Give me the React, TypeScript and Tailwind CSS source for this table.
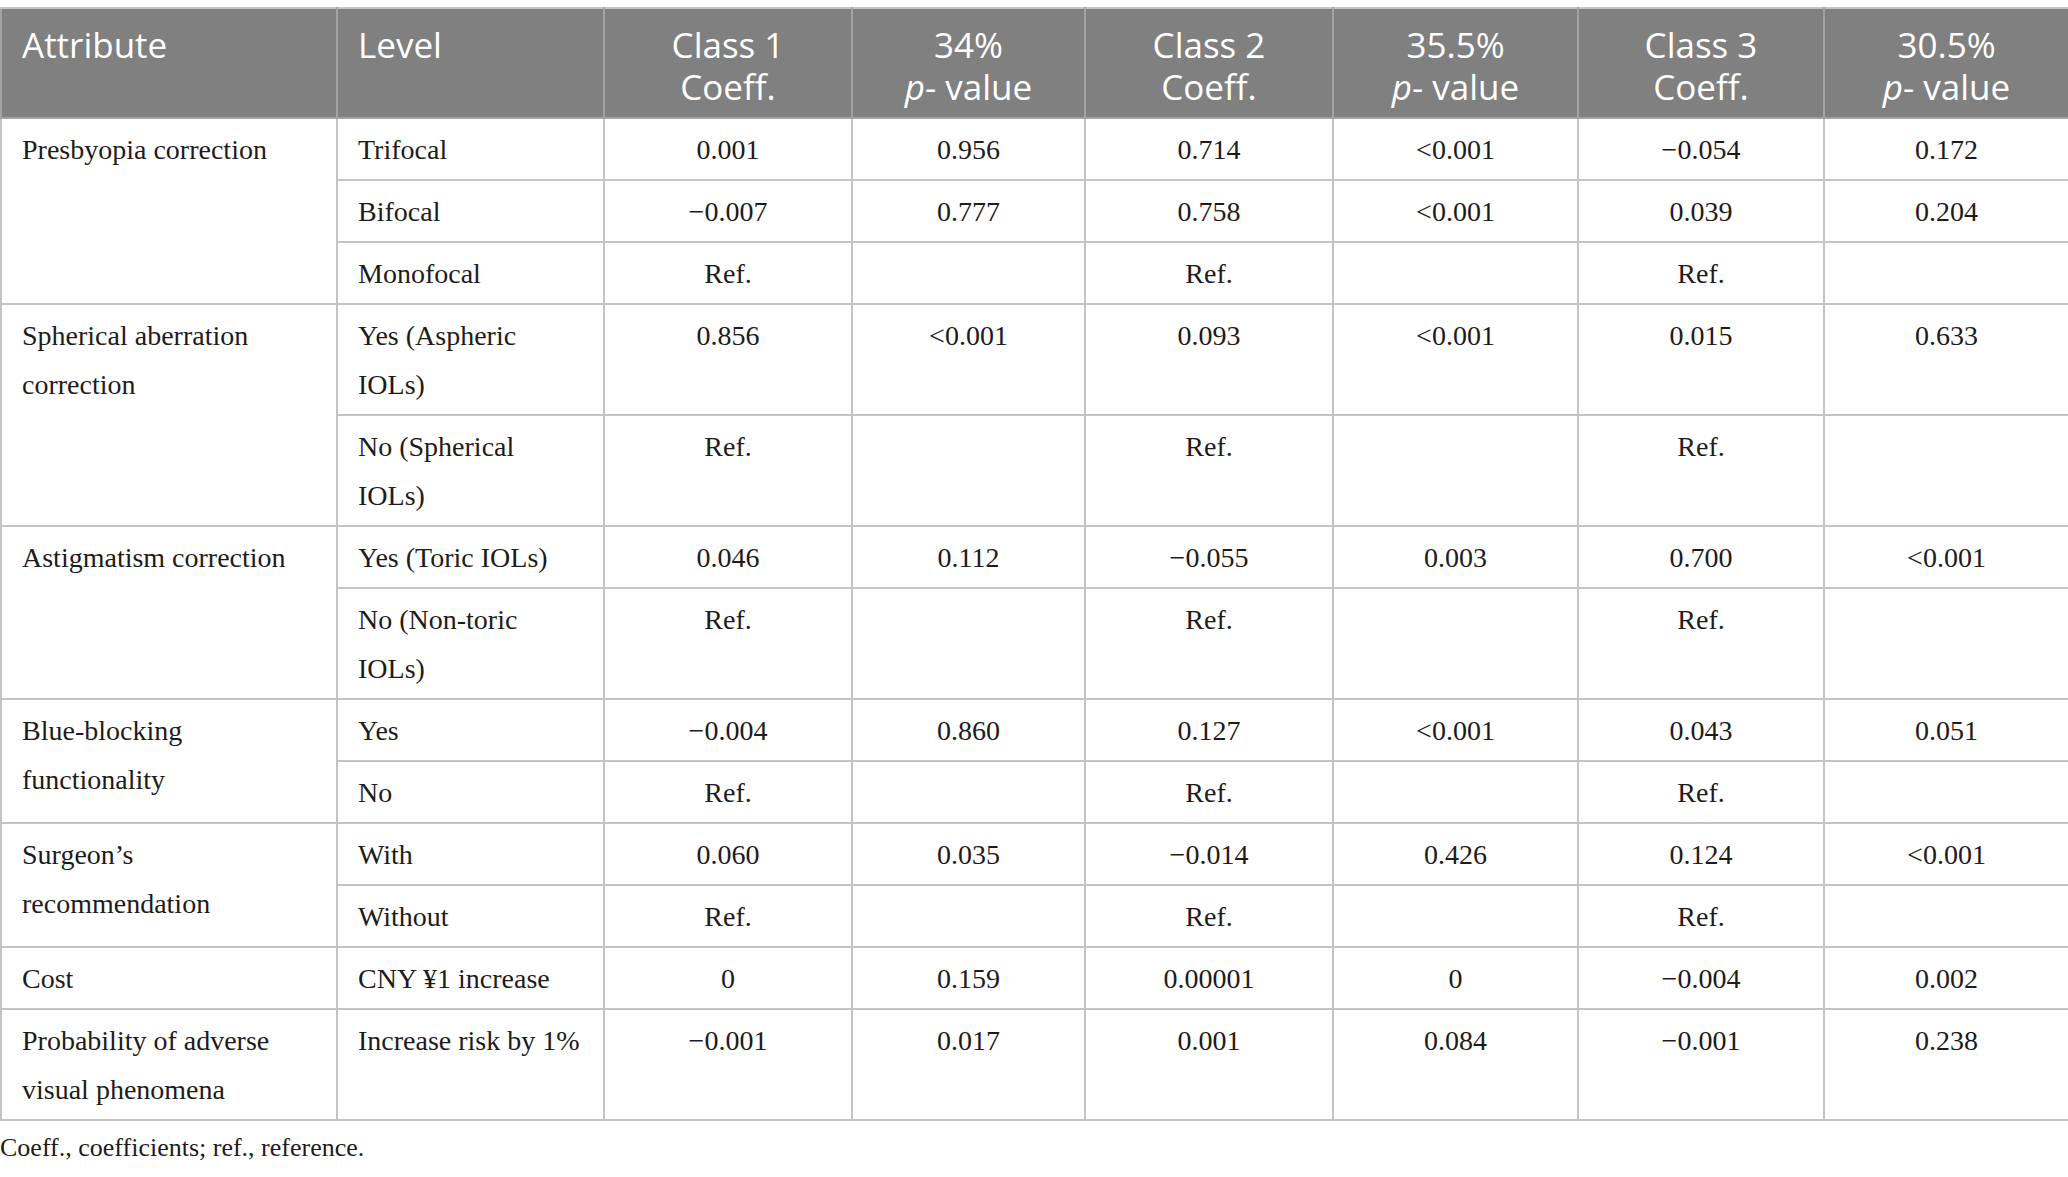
type Row = {
  attribute?: string[];
  span?: number;
  level: string[];
  values: string[];
};

const ROWS: Row[] = [
  { attribute: ['Presbyopia correction'], span: 3, level: ['Trifocal'], values: ['0.001', '0.956', '0.714', '<0.001', '−0.054', '0.172'] },
  { level: ['Bifocal'], values: ['−0.007', '0.777', '0.758', '<0.001', '0.039', '0.204'] },
  { level: ['Monofocal'], values: ['Ref.', '', 'Ref.', '', 'Ref.', ''] },
  { attribute: ['Spherical aberration', 'correction'], span: 2, level: ['Yes (Aspheric', 'IOLs)'], values: ['0.856', '<0.001', '0.093', '<0.001', '0.015', '0.633'] },
  { level: ['No (Spherical', 'IOLs)'], values: ['Ref.', '', 'Ref.', '', 'Ref.', ''] },
  { attribute: ['Astigmatism correction'], span: 2, level: ['Yes (Toric IOLs)'], values: ['0.046', '0.112', '−0.055', '0.003', '0.700', '<0.001'] },
  { level: ['No (Non-toric', 'IOLs)'], values: ['Ref.', '', 'Ref.', '', 'Ref.', ''] },
  { attribute: ['Blue-blocking', 'functionality'], span: 2, level: ['Yes'], values: ['−0.004', '0.860', '0.127', '<0.001', '0.043', '0.051'] },
  { level: ['No'], values: ['Ref.', '', 'Ref.', '', 'Ref.', ''] },
  { attribute: ['Surgeon’s', 'recommendation'], span: 2, level: ['With'], values: ['0.060', '0.035', '−0.014', '0.426', '0.124', '<0.001'] },
  { level: ['Without'], values: ['Ref.', '', 'Ref.', '', 'Ref.', ''] },
  { attribute: ['Cost'], span: 1, level: ['CNY ¥1 increase'], values: ['0', '0.159', '0.00001', '0', '−0.004', '0.002'] },
  { attribute: ['Probability of adverse', 'visual phenomena'], span: 1, level: ['Increase risk by 1%'], values: ['−0.001', '0.017', '0.001', '0.084', '−0.001', '0.238'] },
];

const WIDTHS = ['w-[336px]', 'w-[267px]', 'w-[248px]', 'w-[233px]', 'w-[248px]', 'w-[245px]', 'w-[246px]', 'w-[245px]'];

function Lines({ lines }: { lines: string[] }) {
  return (
    <>
      {lines.map((line, i) => (
        <span key={i} className="block whitespace-nowrap">
          {line}
        </span>
      ))}
    </>
  );
}

function PValue({ pct }: { pct: string }) {
  return (
    <>
      <span className="block">{pct}</span>
      <span className="block">
        <i>p</i>- value
      </span>
    </>
  );
}

function Coeff({ cls }: { cls: string }) {
  return (
    <>
      <span className="block">{cls}</span>
      <span className="block">Coeff.</span>
    </>
  );
}

const th = 'border-2 border-[#a3a3a3] border-t-[#c4c4c4] pt-[15px] pb-[9px] align-top font-normal';
const td = 'border-2 border-[#c4c4c4] pt-[6px] pb-[5px] align-top';

export default function App() {
  return (
    <div className="min-h-screen bg-white pt-[7px]">
      <table className="w-[2068px] table-fixed border-collapse">
        <colgroup>
          {WIDTHS.map((w, i) => (
            <col key={i} className={w} />
          ))}
        </colgroup>
        <thead className="bg-[#808080] text-[35px] leading-[42px] text-white [font-family:'Open_Sans','Noto_Sans',sans-serif]">
          <tr>
            <th className={`${th} pl-[20px] text-left`}>Attribute</th>
            <th className={`${th} pl-[20px] text-left`}>Level</th>
            <th className={`${th} text-center`}><Coeff cls="Class 1" /></th>
            <th className={`${th} text-center`}><PValue pct="34%" /></th>
            <th className={`${th} text-center`}><Coeff cls="Class 2" /></th>
            <th className={`${th} text-center`}><PValue pct="35.5%" /></th>
            <th className={`${th} text-center`}><Coeff cls="Class 3" /></th>
            <th className={`${th} text-center`}><PValue pct="30.5%" /></th>
          </tr>
        </thead>
        <tbody className="text-[28px] leading-[49px] text-[#1e1b1c] [font-family:'Liberation_Serif','DejaVu_Serif',serif]">
          {ROWS.map((row, i) => (
            <tr key={i}>
              {row.attribute && (
                <td rowSpan={row.span} className={`${td} pl-[20px] text-left`}>
                  <Lines lines={row.attribute} />
                </td>
              )}
              <td className={`${td} pl-[20px] text-left`}>
                <Lines lines={row.level} />
              </td>
              {row.values.map((v, j) => (
                <td key={j} className={`${td} text-center`}>
                  {v}
                </td>
              ))}
            </tr>
          ))}
        </tbody>
      </table>
      <p className="mt-[12px] text-[26px] leading-[29px] text-[#1e1b1c] [font-family:'Liberation_Serif','DejaVu_Serif',serif]">
        Coeff., coefficients; ref., reference.
      </p>
    </div>
  );
}
